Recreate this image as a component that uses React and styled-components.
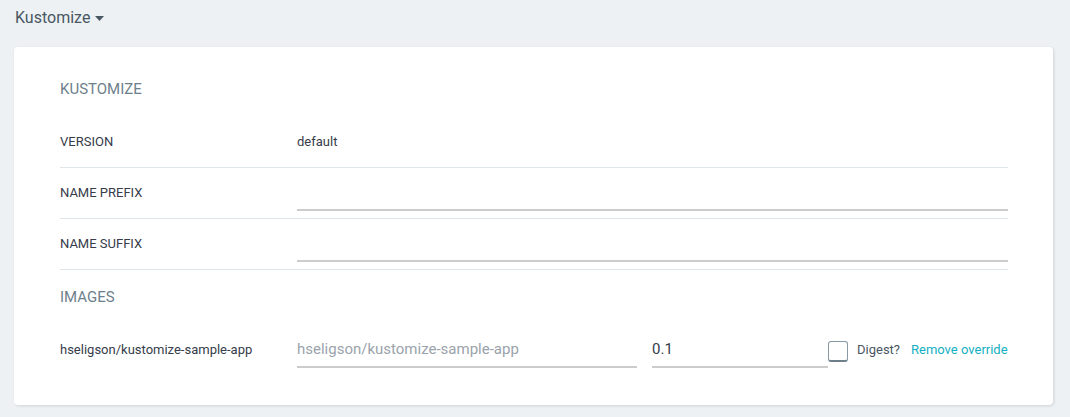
import React from "react";
import styled, { createGlobalStyle } from "styled-components";

const Global = createGlobalStyle`
  html, body { margin: 0; padding: 0; }
  body {
    background: #edf1f4;
    font-family: Roboto, "Liberation Sans", Arial, sans-serif;
    color: #363c4a;
  }
  * { box-sizing: border-box; }
`;

const Page = styled.div`
  padding: 8px 17px 12px 14px;
`;

const Header = styled.div`
  display: flex;
  align-items: center;
  height: 20px;
  padding-left: 1px;
  font-size: 16px;
  line-height: 20px;
  color: #495763;
`;

const Caret = styled.svg`
  margin-left: 5px;
  margin-top: 1px;
`;

const Card = styled.div`
  margin-top: 19px;
  background: #fff;
  border-radius: 4px;
  box-shadow: 1px 1px 3px rgba(0, 0, 0, 0.12);
  padding: 32px 45px 30px 46px;
`;

const Title = styled.div`
  font-size: 15px;
  line-height: 20px;
  color: #6d7f8b;
  text-transform: uppercase;
  margin-bottom: ${(p) => p.$mb || 0}px;
  padding-top: ${(p) => p.$pt || 0}px;
`;

const Row = styled.div`
  display: grid;
  grid-template-columns: 237px 1fr;
  align-items: center;
  height: 51px;
  border-bottom: 1px solid #dfe6ea;
`;

const Label = styled.div`
  font-size: 13px;
  line-height: 16px;
  color: #363c4a;
`;

const Value = styled.div`
  font-size: 13px;
  line-height: 16px;
  color: #363c4a;
`;

const Input = styled.input`
  display: block;
  width: ${(p) => (p.$w ? `${p.$w}px` : "100%")};
  height: 36px;
  padding: 0;
  margin: 0;
  border: none;
  border-bottom: 2px solid #cccccc;
  background: transparent;
  outline: none;
  font-family: inherit;
  font-size: 15px;
  color: #363c4a;
  &::placeholder {
    color: #9aa3ab;
  }
`;

const ImageRow = styled.div`
  display: flex;
  align-items: center;
  height: 50px;
  margin-top: 18px;
`;

const ImageLabel = styled(Label)`
  width: 237px;
  flex: none;
`;

const Spacer = styled.div`
  width: ${(p) => p.$w}px;
  flex: none;
`;

const Checkbox = styled.span`
  display: inline-block;
  width: 20px;
  height: 21px;
  flex: none;
  border: 1px solid #8a9aa5;
  border-bottom: 2px solid #6d7f8b;
  border-radius: 3px;
  background: #fff;
  margin-top: 2px;
`;

const Small = styled.span`
  font-size: 13px;
  line-height: 16px;
  color: #495763;
`;

const Link = styled.a`
  font-size: 13px;
  line-height: 16px;
  color: #14b0c2;
  text-decoration: none;
  cursor: pointer;
`;

export default function App() {
  return (
    <>
      <Global />
      <Page>
        <Header>
          Kustomize
          <Caret width="9" height="5" viewBox="0 0 9 5">
            <polygon points="0,0 9,0 4.5,5" fill="#495763" />
          </Caret>
        </Header>
        <Card>
          <Title $mb={18}>Kustomize</Title>
          <Row>
            <Label>VERSION</Label>
            <Value>default</Value>
          </Row>
          <Row>
            <Label>NAME PREFIX</Label>
            <Input />
          </Row>
          <Row>
            <Label>NAME SUFFIX</Label>
            <Input />
          </Row>
          <Title $pt={17}>Images</Title>
          <ImageRow>
            <ImageLabel>hseligson/kustomize-sample-app</ImageLabel>
            <Input $w={340} placeholder="hseligson/kustomize-sample-app" />
            <Spacer $w={15} />
            <Input $w={176} defaultValue="0.1" />
            <Checkbox />
            <Spacer $w={9} />
            <Small>Digest?</Small>
            <Spacer $w={11} />
            <Link>Remove override</Link>
          </ImageRow>
        </Card>
      </Page>
    </>
  );
}
